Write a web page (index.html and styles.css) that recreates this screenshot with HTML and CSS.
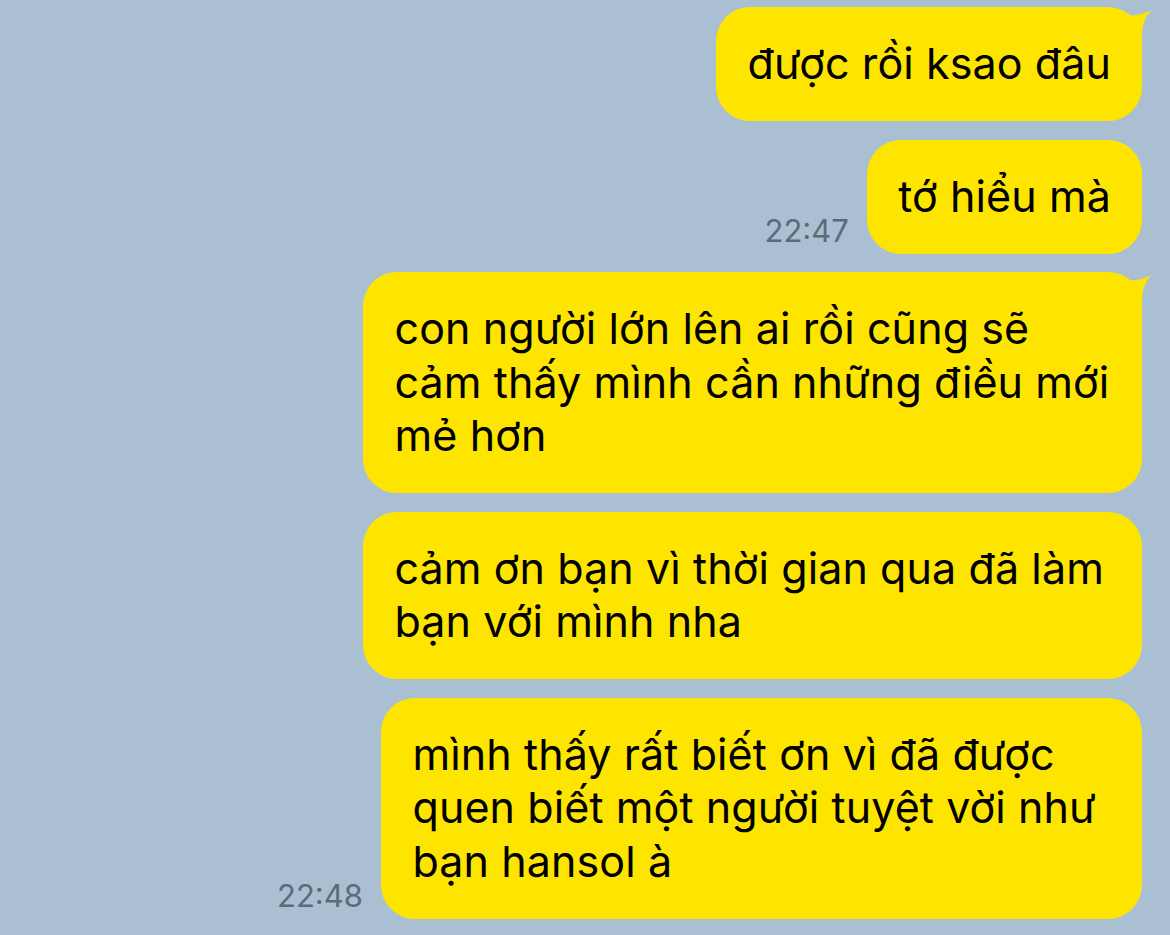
FILE: index.html
```html
<!DOCTYPE html>
<html lang="vi">

<head>
    <meta charset="UTF-8">
    <title>Chat</title>
    <link rel="stylesheet" href="styles.css">
</head>

<body>
    <div class="chat">
        <div class="row">
            <div class="bubble">được rồi ksao đâu
                <svg class="tail" viewBox="0 0 34 44" width="34" height="44"><path d="M0 20 L10 8.5 Q22 8 32 3 C26 8 22 16 22 30 L22 44 L0 44 Z"/></svg>
            </div>
        </div>
        <div class="row">
            <span class="time">22:47</span>
            <div class="bubble">tớ hiểu mà</div>
        </div>
        <div class="row">
            <div class="bubble bubble-wide">con người lớn lên ai rồi cũng sẽ<br>cảm thấy mình cần những điều mới<br>mẻ hơn
                <svg class="tail" viewBox="0 0 34 44" width="34" height="44"><path d="M0 20 L10 8.5 Q22 8 32 3 C26 8 22 16 22 30 L22 44 L0 44 Z"/></svg>
            </div>
        </div>
        <div class="row">
            <div class="bubble bubble-wide">cảm ơn bạn vì thời gian qua đã làm<br>bạn với mình nha</div>
        </div>
        <div class="row">
            <span class="time">22:48</span>
            <div class="bubble bubble-timed">mình thấy rất biết ơn vì đã được<br>quen biết một người tuyệt vời như<br>bạn hansol à</div>
        </div>
    </div>
</body>

</html>
```

FILE: styles.css
```css
html, body {
    margin: 0;
    height: 100%;
}

body {
    background-color: #aac0d2;
    font-family: "Inter", "Noto Sans", sans-serif;
    overflow: hidden;
}

.chat {
    display: flex;
    flex-direction: column;
    align-items: flex-end;
    gap: 18.5px;
    padding: 7px 28px 0 0;
}

.row {
    display: flex;
    align-items: flex-end;
    gap: 18px;
}

.time {
    font-size: 31px;
    line-height: 1;
    color: #5b6b7a;
    padding-bottom: 8px;
}

.bubble {
    position: relative;
    box-sizing: border-box;
    background-color: #fee500;
    color: #000;
    font-size: 43px;
    letter-spacing: 0.1px;
    line-height: 53.5px;
    padding: 30.25px 31px 30.25px 31.5px;
    border-radius: 34px;
    white-space: nowrap;
}

.bubble-wide {
    width: 779px;
}

.bubble-timed {
    width: 761px;
}

.tail {
    position: absolute;
    top: 0;
    right: -12px;
    fill: #fee500;
}
```
